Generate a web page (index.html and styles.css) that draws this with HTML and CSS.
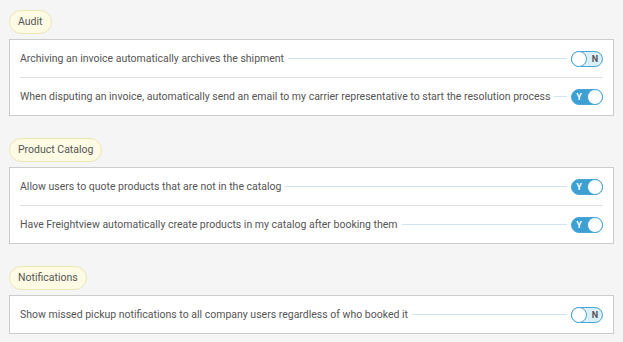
FILE: index.html
```html
<!DOCTYPE html>
<html lang="en">
<head>
<meta charset="utf-8">
<title>Settings</title>
<link rel="stylesheet" href="styles.css">
</head>
<body>
<div class="page">
  <section class="section">
    <div class="pill">Audit</div>
    <div class="card">
      <div class="row">
        <span class="label">Archiving an invoice automatically archives the shipment</span>
        <span class="leader"></span>
        <span class="toggle off"><span class="knob"></span><span class="tag">N</span></span>
      </div>
      <div class="divider"></div>
      <div class="row">
        <span class="label">When disputing an invoice, automatically send an email to my carrier representative to start the resolution process</span>
        <span class="leader"></span>
        <span class="toggle on"><span class="tag">Y</span><span class="knob"></span></span>
      </div>
    </div>
  </section>
  <section class="section">
    <div class="pill">Product Catalog</div>
    <div class="card">
      <div class="row">
        <span class="label">Allow users to quote products that are not in the catalog</span>
        <span class="leader"></span>
        <span class="toggle on"><span class="tag">Y</span><span class="knob"></span></span>
      </div>
      <div class="divider"></div>
      <div class="row">
        <span class="label">Have Freightview automatically create products in my catalog after booking them</span>
        <span class="leader"></span>
        <span class="toggle on"><span class="tag">Y</span><span class="knob"></span></span>
      </div>
    </div>
  </section>
  <section class="section">
    <div class="pill">Notifications</div>
    <div class="card">
      <div class="row">
        <span class="label">Show missed pickup notifications to all company users regardless of who booked it</span>
        <span class="leader"></span>
        <span class="toggle off"><span class="knob"></span><span class="tag">N</span></span>
      </div>
    </div>
  </section>
</div>
</body>
</html>
```
FILE: styles.css
```css
html, body {
  margin: 0;
  padding: 0;
  background: #f5f5f5;
}
body {
  font-family: Roboto, "Liberation Sans", Arial, sans-serif;
  font-size: 10.5px;
  color: #555555;
}
.page {
  padding: 10px 9px 0 9px;
  display: flex;
  flex-direction: column;
  gap: 22px;
}
.section {
  display: flex;
  flex-direction: column;
  align-items: flex-start;
  gap: 5px;
}
.pill {
  box-sizing: border-box;
  height: 24px;
  line-height: 22px;
  padding: 0 8px;
  background: #fdfbe4;
  border: 1px solid #ece5b4;
  border-radius: 12px;
  color: #555555;
}
.card {
  align-self: stretch;
  background: #ffffff;
  border: 1px solid #cccccc;
}
.row {
  height: 37px;
  padding: 0 10px;
  display: flex;
  align-items: center;
}
.label {
  white-space: nowrap;
}
.leader {
  flex: 1;
  height: 1px;
  background: #cfe6f2;
  margin: 0 4px;
}
.divider {
  height: 1px;
  margin: 0 10px;
  background: #e0e0e0;
}
.toggle {
  flex-shrink: 0;
  box-sizing: border-box;
  width: 32px;
  height: 16px;
  border-radius: 8px;
  border: 1px solid #4aa6d6;
  display: flex;
  align-items: center;
  justify-content: space-between;
}
.toggle.off {
  background: #dbeff9;
}
.toggle.on {
  background: #3d9fd2;
}
.knob {
  box-sizing: border-box;
  width: 16px;
  height: 16px;
  margin: -1px;
  border-radius: 50%;
  background: #ffffff;
  border: 1px solid #4aa6d6;
}
.tag {
  font-size: 9px;
  font-weight: 700;
  width: 14px;
  text-align: center;
  line-height: 14px;
}
.toggle.off .tag {
  color: #555555;
}
.toggle.on .tag {
  color: #ffffff;
}
```
